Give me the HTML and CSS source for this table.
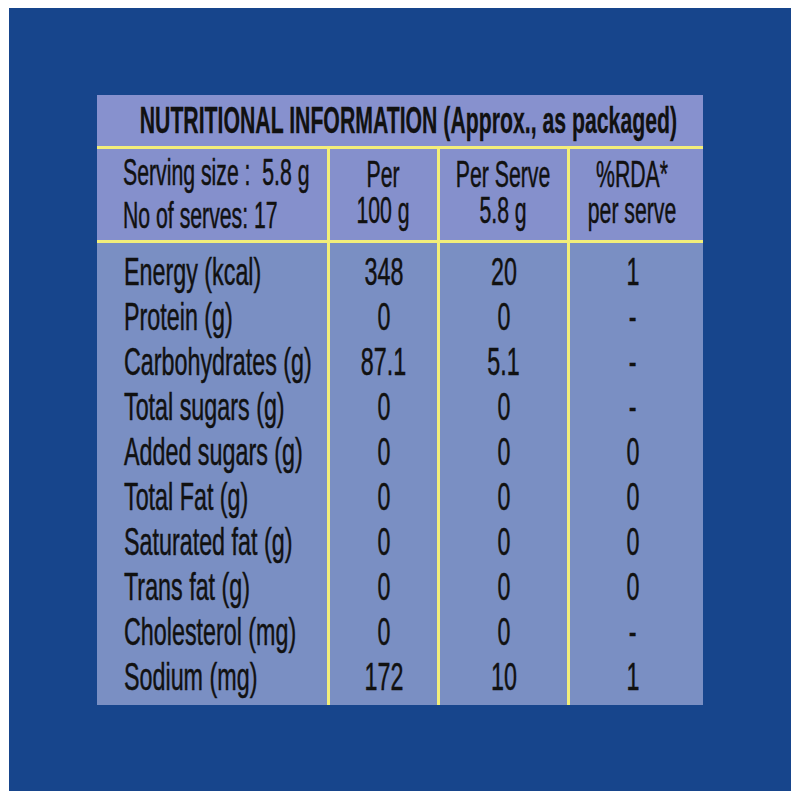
FILE: index.html
```html
<!DOCTYPE html>
<html lang="en">
<head>
<meta charset="utf-8">
<title>Nutritional Information</title>
<link rel="stylesheet" href="styles.css">
</head>
<body>
<div class="page">
  <div class="panel">
    <div class="table">
      <div class="title"><span class="t">NUTRITIONAL INFORMATION (Approx., as packaged)</span></div>
      <div class="head">
        <div class="cell first serving"><span class="t">Serving size :&nbsp; 5.8 g<br>No of serves: 17</span></div>
        <div class="cell"><span class="t">Per<br>100 g</span></div>
        <div class="cell"><span class="t">Per Serve<br>5.8 g</span></div>
        <div class="cell rda"><span class="t">%RDA*<br>per serve</span></div>
      </div>
      <div class="body">
        <div class="row"><div class="cell first"><span class="t">Energy (kcal)</span></div><div class="cell"><span class="t">348</span></div><div class="cell"><span class="t">20</span></div><div class="cell rda"><span class="t">1</span></div></div>
        <div class="row"><div class="cell first"><span class="t">Protein (g)</span></div><div class="cell"><span class="t">0</span></div><div class="cell"><span class="t">0</span></div><div class="cell rda"><span class="t">-</span></div></div>
        <div class="row"><div class="cell first"><span class="t">Carbohydrates (g)</span></div><div class="cell"><span class="t">87.1</span></div><div class="cell"><span class="t">5.1</span></div><div class="cell rda"><span class="t">-</span></div></div>
        <div class="row"><div class="cell first"><span class="t">Total sugars (g)</span></div><div class="cell"><span class="t">0</span></div><div class="cell"><span class="t">0</span></div><div class="cell rda"><span class="t">-</span></div></div>
        <div class="row"><div class="cell first"><span class="t">Added sugars (g)</span></div><div class="cell"><span class="t">0</span></div><div class="cell"><span class="t">0</span></div><div class="cell rda"><span class="t">0</span></div></div>
        <div class="row"><div class="cell first"><span class="t">Total Fat (g)</span></div><div class="cell"><span class="t">0</span></div><div class="cell"><span class="t">0</span></div><div class="cell rda"><span class="t">0</span></div></div>
        <div class="row"><div class="cell first"><span class="t">Saturated fat (g)</span></div><div class="cell"><span class="t">0</span></div><div class="cell"><span class="t">0</span></div><div class="cell rda"><span class="t">0</span></div></div>
        <div class="row"><div class="cell first"><span class="t">Trans fat (g)</span></div><div class="cell"><span class="t">0</span></div><div class="cell"><span class="t">0</span></div><div class="cell rda"><span class="t">0</span></div></div>
        <div class="row"><div class="cell first"><span class="t">Cholesterol (mg)</span></div><div class="cell"><span class="t">0</span></div><div class="cell"><span class="t">0</span></div><div class="cell rda"><span class="t">-</span></div></div>
        <div class="row"><div class="cell first"><span class="t">Sodium (mg)</span></div><div class="cell"><span class="t">172</span></div><div class="cell"><span class="t">10</span></div><div class="cell rda"><span class="t">1</span></div></div>
      </div>
    </div>
  </div>
</div>
</body>
</html>
```

FILE: styles.css
```css
html, body {
  margin: 0;
  padding: 0;
  background: #ffffff;
}

.page {
  padding: 8px 9px 9px 9px;
}

.panel {
  width: 782px;
  height: 783px;
  box-sizing: border-box;
  background: #17458c;
  padding: 87px 0 0 88px;
}

.table {
  width: 606px;
  height: 610px;
  display: flex;
  flex-direction: column;
  font-family: "Liberation Sans", Arial, sans-serif;
  color: #111111;
  -webkit-text-stroke: 0.5px #111111;
}

.t {
  display: block;
  flex: none;
  white-space: nowrap;
  text-align: center;
  transform: scaleX(0.59);
  transform-origin: center center;
}

.title {
  height: 51px;
  line-height: 51px;
  background: #8791ce;
  font-weight: bold;
  font-size: 36px;
  display: flex;
  justify-content: center;
  padding-left: 16px;
  border-bottom: 3px solid #f3ee7a;
  -webkit-text-stroke: 0.3px #111111;
}

.head {
  display: grid;
  grid-template-columns: 230px 110px 130px 136px;
  height: 91px;
  background: #8590cc;
  border-bottom: 3px solid #f3ee7a;
  font-size: 36px;
}

.cell {
  border-left: 3px solid #f3ee7a;
  display: flex;
  justify-content: center;
  align-items: flex-start;
  min-width: 0;
}

.cell.first {
  border-left: none;
  justify-content: flex-start;
  padding-left: 26px;
}

.cell.first .t {
  text-align: left;
  transform-origin: left center;
}

.cell.rda {
  padding-right: 8px;
}

.head .cell {
  line-height: 36px;
  padding-top: 8px;
}

.head .cell.serving {
  line-height: 43px;
  padding-top: 2px;
}

.body {
  flex: 1;
  display: flex;
  flex-direction: column;
  background: #7a8fc3;
  font-size: 39.5px;
}

.row {
  display: grid;
  grid-template-columns: 230px 110px 130px 136px;
  height: 45px;
  line-height: 45px;
}

.row:first-child {
  height: 51px;
}

.row:first-child .cell {
  padding-top: 6px;
}

.row:last-child {
  flex: 1;
}

.body .cell.first {
  padding-left: 27px;
}
```
